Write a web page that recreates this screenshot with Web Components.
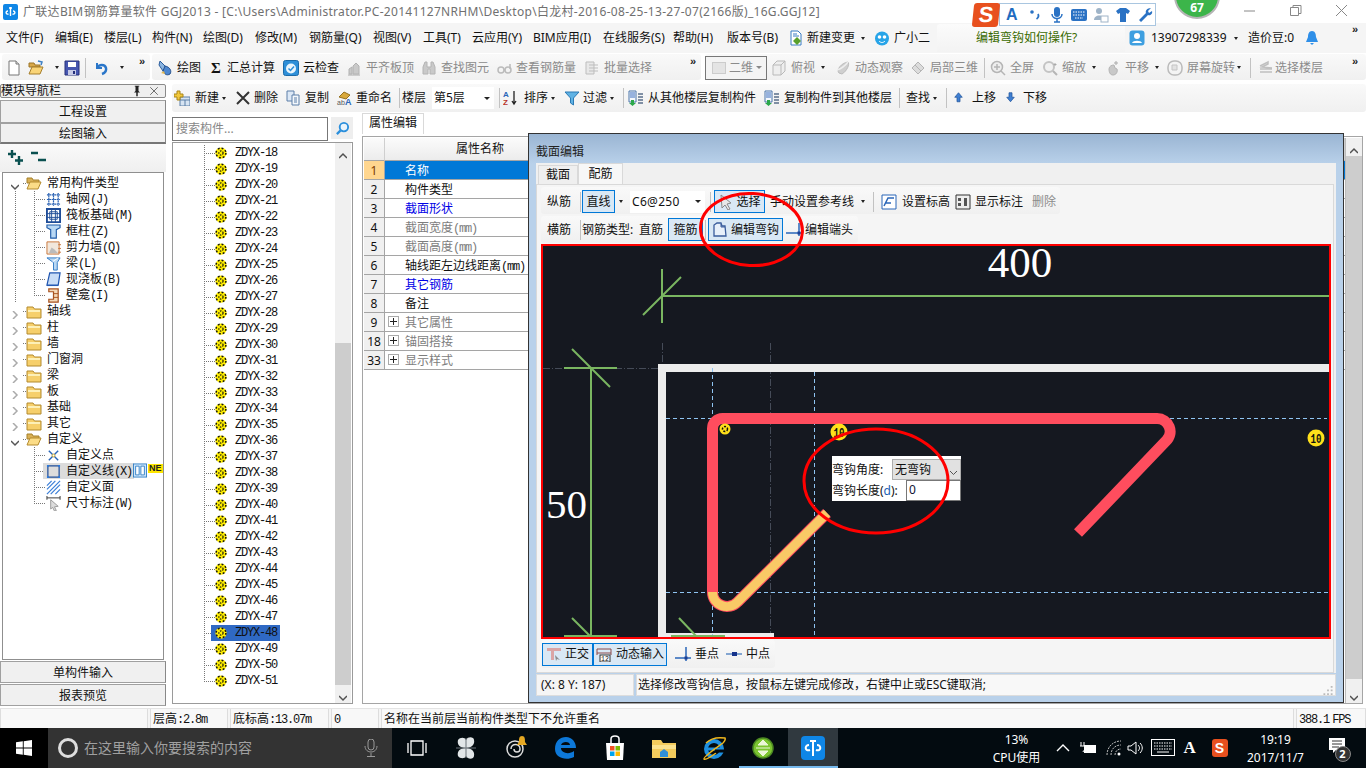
<!DOCTYPE html>
<html lang="zh">
<head>
<meta charset="utf-8">
<title>GGJ2013</title>
<style>
html,body{margin:0;padding:0;}
body{
	position:relative;
	width:1366px;height:768px;overflow:hidden;
	display:flex;flex-direction:column;
	background:#fff;color:#111;
	font:12px/16px "Noto Sans","Noto Sans CJK SC",sans-serif;
}
.work{display:flex;height:628px;flex:none;}
.right{display:flex;flex-direction:column;margin-left:6px;width:1194px;}
.rest{display:flex;flex:1;min-height:0;}
.rowbar{display:flex;gap:0;height:26px;margin-top:1px;flex:none;}
</style>
</head>
<body>
<gl-titlebar>广联达BIM钢筋算量软件 GGJ2013 - [C:\Users\Administrator.PC-20141127NRHM\Desktop\白龙村-2016-08-25-13-27-07(2166版)_16G.GGJ12]</gl-titlebar>

<gl-menubar>
	<gl-tool w="49">文件(F)</gl-tool><gl-tool w="49">编辑(E)</gl-tool><gl-tool w="48">楼层(L)</gl-tool><gl-tool w="51">构件(N)</gl-tool>
	<gl-tool w="52">绘图(D)</gl-tool><gl-tool w="54">修改(M)</gl-tool><gl-tool w="64">钢筋量(Q)</gl-tool><gl-tool w="50">视图(V)</gl-tool>
	<gl-tool w="49">工具(T)</gl-tool><gl-tool w="61">云应用(Y)</gl-tool><gl-tool w="70">BIM应用(I)</gl-tool><gl-tool w="70">在线服务(S)</gl-tool>
	<gl-tool w="54">帮助(H)</gl-tool><gl-tool w="61">版本号(B)</gl-tool>
	<gl-tool w="86" icon="change" gap="3" arrow am="6">新建变更</gl-tool>
	<gl-tool w="63" icon="xiao" gap="4">广小二</gl-tool>
	<gl-help>编辑弯钩如何操作?</gl-help>
	<gl-tool w="119" ml="4" icon="user" gap="6" arrow am="7">13907298339</gl-tool>
	<gl-tool w="56">造价豆:0</gl-tool>
	<gl-tool w="16" icon="bell"></gl-tool>
	<gl-more></gl-more>
</gl-menubar>

<div class="rowbar">
	<gl-toolbar w="148" ml="2" pl="4" pt="1">
		<gl-tool w="22" icon="newfile"></gl-tool>
		<gl-tool w="36" icon="open" arrow am="7"></gl-tool>
		<gl-tool w="21" icon="save"></gl-tool>
		<gl-sep w="9"></gl-sep>
		<gl-tool w="40" icon="undo" arrow am="6"></gl-tool>
		<gl-more></gl-more>
	</gl-toolbar>
	<gl-toolbar w="549" ml="2" pl="5" pt="1">
		<gl-tool w="53" icon="draw">绘图</gl-tool>
		<gl-tool w="73" icon="sigma" gap="1">汇总计算</gl-tool>
		<gl-tool w="63" icon="cloud">云检查</gl-tool>
		<gl-tool w="75" icon="align" off>平齐板顶</gl-tool>
		<gl-tool w="75" icon="binoc" off>查找图元</gl-tool>
		<gl-tool w="88" icon="glasses" off>查看钢筋量</gl-tool>
		<gl-tool w="70" icon="batch" off>批量选择</gl-tool>
		<gl-more></gl-more>
	</gl-toolbar>
	<gl-toolbar w="661" ml="4" pr="4" pt="1">
		<gl-combo w="62" boxed off label="二维"></gl-combo>
		<gl-tool w="64" ml="4" icon="cube" off arrow am="6">俯视</gl-tool>
		<gl-tool w="75" icon="orbit" off>动态观察</gl-tool>
		<gl-tool w="74" icon="local3d" off>局部三维</gl-tool>
		<gl-sep w="6"></gl-sep>
		<gl-tool w="52" icon="zoomfull" off>全屏</gl-tool>
		<gl-tool w="63" icon="zoomin" off arrow am="6">缩放</gl-tool>
		<gl-tool w="62" icon="pan" off arrow am="6">平移</gl-tool>
		<gl-tool w="83" icon="rotate" off arrow am="2">屏幕旋转</gl-tool>
		<gl-sep w="8"></gl-sep>
		<gl-tool w="70" icon="layers" gap="1" off>选择楼层</gl-tool>
		<gl-more></gl-more>
	</gl-toolbar>
</div>

<div class="work">
	<gl-nav></gl-nav>
	<div class="right">
		<gl-toolbar w="1194" h="28" mt="4" pl="2">
			<gl-tool w="61" icon="newitem" gap="5" arrow am="3">新建</gl-tool>
			<gl-tool w="50" icon="cross" gap="3">删除</gl-tool>
			<gl-tool w="51" icon="copy">复制</gl-tool>
			<gl-tool w="63" icon="rename">重命名</gl-tool>
			<gl-sep w="3"></gl-sep>
			<gl-tool w="30">楼层</gl-tool>
			<gl-combo w="62" label="第5层"></gl-combo>
			<gl-sep w="4" ml="5"></gl-sep>
			<gl-tool w="61" icon="sort" gap="5" arrow am="3">排序</gl-tool>
			<gl-tool w="59" icon="filter" gap="3" arrow am="3">过滤</gl-tool>
			<gl-sep w="5"></gl-sep>
			<gl-tool w="136" icon="copyfloor">从其他楼层复制构件</gl-tool>
			<gl-tool w="135" icon="copyfloor">复制构件到其他楼层</gl-tool>
			<gl-sep w="7"></gl-sep>
			<gl-tool w="40" arrow am="3">查找</gl-tool>
			<gl-sep w="8"></gl-sep>
			<gl-tool w="52" icon="up" iw="12" gap="6">上移</gl-tool>
			<gl-tool w="50" icon="down" iw="12" gap="5">下移</gl-tool>
		</gl-toolbar>
		<div class="rest">
			<gl-compo-list></gl-compo-list>
			<gl-props></gl-props>
		</div>
	</div>
</div>

<gl-status></gl-status>
<gl-taskbar></gl-taskbar>

<gl-dialog heading="截面编辑">
	<gl-toolbar slot="bars" w="519" h="27" pl="6" pt="2">
		<gl-tool w="33">纵筋</gl-tool><gl-sep w="2"></gl-sep>
		<gl-tool w="33" on>直线</gl-tool>
		<gl-tool w="15" arrow am="4"></gl-tool>
		<gl-combo w="75" label="C6@250" wide></gl-combo>
		<gl-sep w="4" ml="5"></gl-sep>
		<gl-tool w="51" on icon="pointer" gap="2">选择</gl-tool>
		<gl-tool w="103" ml="5" arrow am="7">手动设置参考线</gl-tool>
		<gl-sep w="8"></gl-sep>
		<gl-tool w="74" icon="level" gap="5">设置标高</gl-tool>
		<gl-tool w="77" icon="dimshow">显示标注</gl-tool>
		<gl-tool w="28" off>删除</gl-tool>
	</gl-toolbar>
	<gl-toolbar slot="bars" w="317" h="27" mt="2" pl="6">
		<gl-tool w="33">横筋</gl-tool><gl-sep w="2"></gl-sep>
		<gl-tool w="57">钢筋类型:</gl-tool>
		<gl-tool w="29">直筋</gl-tool>
		<gl-tool w="35" on>箍筋</gl-tool>
		<gl-sep w="3" ml="2"></gl-sep>
		<gl-tool w="75" on icon="hook" gap="3">编辑弯钩</gl-tool>
		<gl-tool w="68" ml="3" icon="endhead" gap="3">编辑端头</gl-tool>
	</gl-toolbar>
	<gl-canvas slot="canvas">
		<gl-hook-popup></gl-hook-popup>
	</gl-canvas>
	<gl-toolbar slot="snap" w="234" h="28" mt="1" pl="1">
		<gl-tool w="51" on icon="ortho" gap="3">正交</gl-tool>
		<gl-tool w="74" on icon="dyn" gap="4">动态输入</gl-tool>
		<gl-tool w="51" ml="8" icon="perp" gap="4">垂点</gl-tool>
		<gl-tool w="46" icon="mid" gap="4">中点</gl-tool>
	</gl-toolbar>
</gl-dialog>

<gl-badge>67</gl-badge>
<gl-ime></gl-ime>
<gl-annotations></gl-annotations>

<script>
'use strict';

const svg = (inner, vb='0 0 16 16') => `<svg xmlns="http://www.w3.org/2000/svg" viewBox="${vb}" width="100%" height="100%">${inner}</svg>`;
const folderShut = `<path d="M1 4h6l1.500 2H15v9H1z" fill="#f6cf6b" stroke="#b38a2e"/><path d="M2 7h12v2H2z" fill="#fdf0b8"/>`;
const folderOpen = `<path d="M1 3h5l1 2h6v3H1z" fill="#d9b055" stroke="#a5802b"/><path d="M1 14L4 7h11l-3 7z" fill="#fbdc87" stroke="#b38a2e"/>`;
const gear = `<circle cx="8" cy="8" r="7.500" fill="#ffee00"/><circle cx="8" cy="8" r="6.500" fill="none" stroke="#111" stroke-width="2" stroke-dasharray="2.500 2.600"/><circle cx="8" cy="8" r="2.800" fill="none" stroke="#111" stroke-width="1.500" stroke-dasharray="2 1.500"/>`;

const ICONS = {
	newfile: `<path d="M3 1h7l3 3v11H3z" fill="#fff" stroke="#777"/><path d="M10 1v3h3" fill="#ddd" stroke="#777"/>`,
	open: `<path d="M1 3h5l1 2h5v2H1z" fill="#d8a84a" stroke="#9b7426"/><path d="M1 14l3-7h11l-3 7z" fill="#f9d477" stroke="#a57e2c"/><path d="M10 1l4 1-1 3" fill="none" stroke="#3b7fc4" stroke-width="1.500"/>`,
	save: `<path d="M1 1h14v14H1z" fill="#4656b0" stroke="#26307a"/><path d="M4 2h8v5H4z" fill="#fff"/><path d="M4 10h8v5H4z" fill="#c7cbe6"/><path d="M9 11h2v3H9z" fill="#26307a"/>`,
	undo: `<path d="M3 3v5h5" fill="none" stroke="#2a76c9" stroke-width="2"/><path d="M3 8c2-4 8-4 9 0 .6 3-1 5-4 6" fill="none" stroke="#2a76c9" stroke-width="2.500"/>`,
	draw: `<path d="M3 1l6 6-3 4-4-6z" fill="#8ab4e0" stroke="#2a5c9c"/><path d="M8 6c5 1 7 5 5 8-3 2-6 0-7-3z" fill="#4d87d0" stroke="#234f8c"/><path d="M4 13l3-2 1 3z" fill="#e5b94e"/>`,
	sigma: `<text x="1" y="13" font-family="Liberation Serif" font-weight="700" font-size="15" fill="#111">Σ</text>`,
	cloud: `<rect x="0.500" y="0.500" width="15" height="15" rx="2" fill="#2e8fd8" stroke="#1b6aa8"/><circle cx="8" cy="8.500" r="5" fill="#eaf5fc"/><path d="M5.500 8.500l2 2 3.500-4" fill="none" stroke="#2e8fd8" stroke-width="1.500"/>`,
	align: `<path d="M3 14V9l3-2v7zM7 14V6l3-3 3 3v8z" fill="#c9c9c9" stroke="#b2b2b2"/><path d="M2 15h12" stroke="#aaa"/>`,
	binoc: `<path d="M2 7l2-5h2v5h4V2h2l2 5v7h-5V9H7v5H2z" fill="#c9c9c9" stroke="#b4b4b4"/>`,
	glasses: `<circle cx="5" cy="10" r="3" fill="none" stroke="#bbb" stroke-width="1.500"/><circle cx="12" cy="10" r="3" fill="none" stroke="#bbb" stroke-width="1.500"/><path d="M8 10h1M14 9V4" stroke="#bbb" stroke-width="1.500"/>`,
	batch: `<path d="M2 2h8v12H2zM5 5h9M5 8h9M5 11h9" fill="#e8e8e8" stroke="#bdbdbd"/>`,
	cube: `<path d="M2 5l4-4h8v10l-4 4H2z" fill="#eee" stroke="#b9b9b9"/><path d="M2 5h8v10M10 5l4-4" fill="none" stroke="#b9b9b9"/>`,
	orbit: `<path d="M4 13C1 10 6 3 13 2c2 2-1 9-6 12z" fill="#cfcfcf" stroke="#bbb"/><path d="M2 10c3-1 8-4 11-8" fill="none" stroke="#eee" stroke-width="1.500"/>`,
	local3d: `<path d="M2 8l6-6 6 6-6 6z" fill="#dcdcdc" stroke="#b5b5b5"/><path d="M5 5l6 6M8 2l6 6" stroke="#b5b5b5"/>`,
	zoomfull: `<circle cx="7" cy="7" r="5.500" fill="#eee" stroke="#b5b5b5" stroke-width="1.500"/><path d="M4 7h6M7 4v6M11 11l4 4" stroke="#b5b5b5" stroke-width="1.500"/>`,
	zoomin: `<circle cx="7" cy="7" r="5" fill="#f2f2f2" stroke="#c4c4c4" stroke-width="2"/><path d="M11 11l4 4" stroke="#b5b5b5" stroke-width="2"/><path d="M13 3v3M11.500 4.500h3" stroke="#aaa"/>`,
	pan: `<path d="M4 9c0-3 3-4 5-4l1 3 2 1c1 3-1 6-4 6-3 0-4-3-4-6z" fill="#c8c8c8" stroke="#b4b4b4"/><path d="M11 1v4M9 3h4" stroke="#aaa"/>`,
	rotate: `<rect x="1" y="1" width="14" height="14" rx="6" fill="#f4f4f4" stroke="#bbb" stroke-width="1.500"/><path d="M5 5h5v5H5z" fill="#e2e2e2" stroke="#c4c4c4"/>`,
	layers: `<path d="M2 6l8-4v2L4 7l10 1M2 9l12 0M2 12l12 0" fill="none" stroke="#c0c0c0" stroke-width="1.500"/>`,
	newitem: `<rect x="6" y="7" width="10" height="9" fill="#d7e4f2" stroke="#5b7fa6"/><path d="M6 10h10M11 10v6" stroke="#5b7fa6"/><path d="M3 1h3v3h3v3H6v3H3V7H0V4h3z" fill="#f2c83c" stroke="#a98618"/>`,
	cross: `<path d="M2 2l12 12M14 2L2 14" stroke="#333" stroke-width="2"/>`,
	copy: `<path d="M2 1h7v10H2z" fill="#dce8f6" stroke="#5d7ea8"/><path d="M7 5h7v10H7z" fill="#f4f8fc" stroke="#5d7ea8"/><path d="M9 8h3M9 10h3M9 12h3" stroke="#5d7ea8"/>`,
	rename: `<path d="M3 7l5-5 6 3-4 4z" fill="#d9a93c" stroke="#94701e"/><text x="1" y="15" font-size="7" font-family="Liberation Sans" fill="#555">ab</text><text x="9" y="15" font-size="9" font-weight="700" font-family="Liberation Sans" fill="#2a66b8">A</text>`,
	sort: `<text x="0" y="7" font-size="8" font-weight="700" font-family="Liberation Sans" fill="#2a66b8">A</text><text x="0" y="15" font-size="8" font-weight="700" font-family="Liberation Sans" fill="#b8342a">Z</text><path d="M11 1v13M9 11l2 3 2-3" fill="none" stroke="#222" stroke-width="1.300"/>`,
	filter: `<path d="M1 2h14L9.500 8v7l-3-2V8z" fill="#5fb2e4" stroke="#2a79b4"/>`,
	copyfloor: `<path d="M1 1h7v11H1z" fill="#f4f8fc" stroke="#4a74aa"/><path d="M2 3h5M2 5h5M2 7h5" stroke="#3a6cc0"/><path d="M3 10h3v3h2l-3.500 3L1 13h2z" fill="#2ba84a"/><path d="M10 4h5M10 7h5M10 10h5M10 13h5" stroke="#5a6f8a" stroke-width="1.500"/>`,
	up: `<path d="M6 1l5 6H8v6H4V7H1z" fill="#3f7fd2" stroke="#24579c"/>`,
	down: `<path d="M6 13L1 7h3V1h4v6h3z" fill="#3f7fd2" stroke="#24579c"/>`,
	change: `<path d="M3 1h7l3 3v11H3z" fill="#fff" stroke="#3a7cc4"/><path d="M5 4h4M5 6h6" stroke="#3a7cc4"/><path d="M9 7l4 4-4 4-4-4z" fill="#5aa02c"/>`,
	xiao: `<ellipse cx="8" cy="8.500" rx="7" ry="7" fill="#27a4e8"/><circle cx="5.500" cy="7" r="1.800" fill="#fff"/><circle cx="10.500" cy="7" r="1.800" fill="#fff"/><path d="M5 11c2 2 4 2 6 0" fill="none" stroke="#fff"/>`,
	user: `<rect x="0.500" y="0.500" width="15" height="15" rx="3" fill="#3e9fe0"/><circle cx="8" cy="6" r="3" fill="#fff"/><path d="M3 13c1-3 9-3 10 0z" fill="#fff"/>`,
	bell: `<path d="M8 1c3 0 4 3 4 6l2 5H2l2-5c0-3 1-6 4-6z" fill="#2f8fe8"/><path d="M6 13h4l-2 2z" fill="#2f8fe8"/>`,
	pointer: `<path d="M3 1l10 8-4 1 3 5-2 1-3-5-3 3z" fill="#e8e8e8" stroke="#888"/>`,
	level: `<path d="M1 1h14v14H1z" fill="#fff" stroke="#2a66b8"/><path d="M3 12l4-8h6M5 9h5" fill="none" stroke="#2a66b8" stroke-width="1.500"/>`,
	dimshow: `<path d="M1 1h14v14H1z" fill="#eee" stroke="#333"/><path d="M3 4h3v3H3zM9 4h3v8H9zM3 9h3v3H3z" fill="#555"/>`,
	hook: `<path d="M2 14V3l3-2h4l1 3h3l1 10z" fill="#e8f0fa" stroke="#3a5c9c" stroke-width="1.300"/><path d="M9 2v3h4" fill="none" stroke="#3a5c9c"/>`,
	endhead: `<path d="M0 11h16" stroke="#2a66b8" stroke-width="1.500"/><path d="M13 1v13" stroke="#2a66b8" stroke-width="1.500"/><rect x="11.500" y="9.500" width="3" height="3" fill="#1c3f94"/>`,
	ortho: `<path d="M1 2h14v3H8v9H5V5H1z" fill="#dba5a5"/><path d="M9 9l5 5-3-1-1 2z" fill="#8b8b8b"/>`,
	dyn: `<path d="M1 3h14M1 3v6M15 3v6M1 7h14" fill="none" stroke="#8c4a4a"/><rect x="4" y="9" width="10" height="7" fill="#fff" stroke="#333"/><text x="5" y="15" font-size="6.500" font-family="Liberation Mono" fill="#111">12</text>`,
	perp: `<path d="M0 12h16" stroke="#2a66b8" stroke-width="1.500"/><path d="M11 1v14" stroke="#2a66b8" stroke-width="1.500"/><rect x="9.500" y="10.500" width="3" height="3" fill="#1c3f94"/>`,
	mid: `<path d="M0 8h16" stroke="#5c8ac4" stroke-width="1.500"/><rect x="6" y="6" width="5" height="4" fill="#16338c"/>`,
	plusplus: `<path d="M5 0v8M1 4h8M12 6v9M8 10.500h8" stroke="#0a5050" stroke-width="2.400"/>`,
	minusminus: `<path d="M1 3h7M8 10h8" stroke="#0a5050" stroke-width="2.400"/>`,
	folder: folderShut,
	folderopen: folderOpen,
	grid: `<path d="M1 1h14v14H1z" fill="#fff"/><path d="M1 3h14M1 8h14M1 13h14M3 1v14M8 1v14M13 1v14" stroke="#2a62b4" stroke-width="1.300" stroke-dasharray="2 .6"/>`,
	raft: `<path d="M1 1h14v14H1z" fill="#fff" stroke="#1f4d98" stroke-width="2"/><path d="M4 4h8v8H4zM1 6h14M1 10h14M6 1v14M10 1v14" fill="none" stroke="#1f4d98"/>`,
	column: `<path d="M1 1h14v3l-4 2v9H5V6L1 4z" fill="#b9d8f4" stroke="#1f5ba8" stroke-width="1.200"/>`,
	shearwall: `<path d="M1 2h13v13H1z" fill="#f1e7dc" stroke="#c9743a"/><path d="M3 14l3-6 3 2 4 4z" fill="#bbb"/><path d="M13 5h3M13 9h3M13 13h3" stroke="#c9743a"/>`,
	beam: `<path d="M1 2h14l-3 5v8H8V7z" fill="#b9d8f4" stroke="#2f79c4"/><path d="M7 6l6-4" stroke="#fff"/>`,
	slab: `<path d="M4 1h11l-2 13H1z" fill="#c9ddf6" stroke="#1f55b0" stroke-width="1.300"/><path d="M1 14h12v1H1z" fill="#1f55b0"/>`,
	niche: `<path d="M3 1h10v14H3v-3h5V4H3z" fill="#f4d9b8" stroke="#a8521e" stroke-width="1.300"/><path d="M8 6h5M8 10h5" stroke="#a8521e"/>`,
	custompoint: `<path d="M3 3l10 10M13 3L3 13" stroke="#2a66b8" stroke-width="1.500"/><circle cx="8" cy="8" r="1.500" fill="#fff" stroke="#c8a020"/>`,
	customline: `<path d="M2 2h12v12H2z" fill="none" stroke="#1f4d98" stroke-width="1.300"/><path d="M1 1h2v2H1zM13 1h2v2h-2zM1 13h2v2H1zM13 13h2v2h-2z" fill="#2a7be0"/>`,
	customarea: `<path d="M1 6l5-5M1 10l9-9M1 15L15 1M5 15L15 5M10 15l5-5" stroke="#3b7fd8" stroke-width="1.300"/>`,
	dimtool: `<path d="M1 2h14M1 0v4M15 0v4" stroke="#333"/><path d="M5 4l8 7-4 .5 2 4-2 .5-2-4-2 2z" fill="#ddd" stroke="#999"/>`,
	gear,
	pin: `<path d="M5 1h6v1H10v6l2 2H9v5H7v-5H4l2-2V2H5z" fill="#222"/>`,
	close: `<path d="M3 3l10 10M13 3L3 13" stroke="#444"/>`,
	cols: `<rect x="0.500" y="0.500" width="15" height="15" fill="#cfe6fa" stroke="#2a7bc4"/><path d="M3 3h4v10H3zM9 3h4v10H9z" fill="#fff" stroke="#2a7bc4"/>`,
};
const iconSvg = name => svg(ICONS[name] || '');

// latin part of the bitmap font: narrow fixed width
const monoWrap = text => text.replace(/[\x21-\x7e]+/g, m=>`<span class="m">${m}</span>`);
const MONO_CSS = `.m{font:12px/16px "Liberation Mono",monospace;letter-spacing:-1.2px;}`;

class ShadowEl extends HTMLElement {
	constructor(){
		super();
		this.attachShadow({mode:'open'});
	}
	connectedCallback(){
		this.Render();
	}
	Render(){
		this.shadowRoot.innerHTML = `<style>${this.InitialCss}</style>${this.Template}`;
	}
	get InitialCss(){ return ':host{display:block}'; }
	get Template(){ return '<slot></slot>'; }
}

class GlTitlebar extends ShadowEl {
	get InitialCss(){
		return `
:host{display:flex;align-items:center;height:23px;flex:none;background:#fff;color:#707070;padding-left:3px;box-sizing:border-box;position:relative;}
.logo{width:15px;height:16px;margin-right:5px;flex:none;}
.txt{white-space:nowrap;letter-spacing:.3px;}
.btns{position:absolute;left:1242px;top:3px;display:flex;gap:31px;}
.btns i{width:15px;height:15px;display:block;}
		`;
	}
	get Template(){
		return `<span class="logo">${svg('<rect width="15" height="16" rx="2" fill="#0f86e6"/><path d="M7.500 3v9M5 7c-3 0-2 4 .5 3M10 7c3 0 2 4-.5 3M6 4h3" fill="none" stroke="#fff" stroke-width="1.400"/>','0 0 15 16')}</span>
		<span class="txt"><slot></slot></span>
		<div class="btns">
			<i>${svg('<path d="M2 8h11" stroke="#888"/>','0 0 15 15')}</i>
			<i>${svg('<path d="M2.500 4.500h8v8h-8zM5 4.500V2.500h8v8h-2.500" fill="none" stroke="#888"/>','0 0 15 15')}</i>
			<i>${svg('<path d="M2 2l11 11M13 2L2 13" stroke="#888"/>','0 0 15 15')}</i>
		</div>`;
	}
}

class GlMenubar extends ShadowEl {
	get InitialCss(){
		return `:host{display:flex;align-items:center;height:30px;flex:none;background:#f5f5f5;padding:0 4px 0 6px;box-sizing:border-box;}
		::slotted(gl-more){margin-left:auto;}`;
	}
}

class GlHelp extends ShadowEl {
	get InitialCss(){
		return `:host{display:flex;align-items:center;width:188px;height:28px;box-sizing:border-box;padding-left:39px;background:linear-gradient(#fbfbfb,#f3f3f3);color:#3a6b00;border-radius:3px 3px 0 0;white-space:nowrap;}`;
	}
}

class GlToolbar extends ShadowEl {
	Render(){
		super.Render();
		let a = n=>this.getAttribute(n);
		this.style.width = a('w')+'px';
		if(a('h')) this.style.height = a('h')+'px';
		if(a('ml')) this.style.marginLeft = a('ml')+'px';
		if(a('mt')) this.style.marginTop = a('mt')+'px';
		if(a('pl')) this.style.paddingLeft = a('pl')+'px';
		if(a('pr')) this.style.paddingRight = a('pr')+'px';
		if(a('pt')) this.style.paddingTop = a('pt')+'px';
	}
	get InitialCss(){
		return `:host{display:flex;align-items:center;flex:none;box-sizing:border-box;height:26px;padding-right:1px;background:linear-gradient(#f9f9f9,#f0f0f0);border-radius:3px;}
		::slotted(gl-more){margin-left:auto;}`;
	}
}

class GlTool extends ShadowEl {
	Render(){
		let a = n=>this.getAttribute(n);
		let hasIcon = this.hasAttribute('icon');
		this.shadowRoot.innerHTML = `<style>
:host{display:flex;align-items:center;flex:none;box-sizing:border-box;white-space:nowrap;height:100%;}
:host([off]){color:#8b8b8b;}
:host([on]){background:#d9e8f5;border:1px solid #0078d7;justify-content:center;height:23px;}
.i{display:block;flex:none;height:16px;}
.a{flex:none;width:0;height:0;border:3px solid transparent;border-top:3px solid #222;border-bottom:0;border-left-width:2.5px;border-right-width:2.5px;}
		</style>`+
		(hasIcon ? `<span class="i" style="width:${a('iw')||16}px;margin-right:${a('gap')||4}px">${iconSvg(a('icon'))}</span>` : '')+
		`<slot></slot>`+
		(this.hasAttribute('arrow') ? `<span class="a" style="margin-left:${a('am')||4}px"></span>` : '');
		this.style.width = a('w')+'px';
		if(a('ml')) this.style.marginLeft = a('ml')+'px';
	}
}

class GlSep extends ShadowEl {
	Render(){
		super.Render();
		this.style.width = this.getAttribute('w')+'px';
		if(this.getAttribute('ml')) this.style.marginLeft = this.getAttribute('ml')+'px';
	}
	get InitialCss(){
		return `:host{display:block;flex:none;box-sizing:border-box;height:20px;border-left:1px solid #c2c2c2;}`;
	}
	get Template(){ return ''; }
}

class GlMore extends ShadowEl {
	get InitialCss(){
		return `:host{display:block;flex:none;width:10px;font:700 11px/10px "Liberation Sans",sans-serif;color:#222;align-self:flex-start;margin-top:1px;}`;
	}
	get Template(){ return '»'; }
}

class GlCombo extends ShadowEl {
	Render(){
		super.Render();
		this.style.width = this.getAttribute('w')+'px';
	}
	get InitialCss(){
		return `
:host{display:flex;align-items:center;flex:none;box-sizing:border-box;height:22px;background:#fff;padding:0 4px 0 2px;white-space:nowrap;}
:host([boxed]){height:24px;background:#f4f4f4;border:1px solid #777;padding-left:6px;gap:3px;}
:host([off]){color:#8b8b8b;}
:host([wide]) .l{letter-spacing:.3px;}
.sq{width:16px;height:12px;background:#e4e4e4;border:1px solid #ccc;box-sizing:border-box;display:none;}
:host([boxed]) .sq{display:block;}
.a{margin-left:auto;width:0;height:0;border:3px solid transparent;border-top:3px solid #222;border-bottom:0;}
:host([off]) .a{border-top-color:#888;}
		`;
	}
	get Template(){
		return `<span class="sq"></span><span class="l">${this.getAttribute('label')}</span><span class="a"></span>`;
	}
}

class GlNav extends ShadowEl {
	get InitialCss(){
		return `
:host{display:flex;flex-direction:column;width:166px;flex:none;box-sizing:border-box;padding:4px 0 2px;}
.head{display:flex;align-items:center;height:12px;border:1px solid #8a8a8a;border-radius:2px;background:#efefef;flex:none;}
.head span{flex:1;}
.head i{width:12px;height:12px;margin-right:5px;display:block;}
.btn{display:flex;align-items:center;justify-content:center;box-sizing:border-box;background:#f0f0f0;border:1px solid #a0a0a0;border-right-color:#888;flex:none;padding-top:1px;}
.b1{height:23px;margin-top:2px;}
.b2{height:21px;border-bottom:2px solid #777;}
.b3{height:22px;}
.b4{height:22px;margin-top:1px;}
.icons{display:flex;align-items:center;gap:7px;height:28px;padding-left:7px;background:linear-gradient(#fafafa,#efefef);flex:none;}
.icons i{width:16px;height:16px;display:block;}
.box{flex:1;min-height:0;margin:0 2px 1px 2px;border:1px solid #8f8f8f;background:#fff;box-sizing:border-box;padding-top:2px;overflow:hidden;}
		`;
	}
	get Template(){
		return `<div class="head"><span>模块导航栏</span><i>${iconSvg('pin')}</i><i>${iconSvg('close')}</i></div>
		<div class="btn b1">工程设置</div>
		<div class="btn b2">绘图输入</div>
		<div class="icons"><i>${iconSvg('plusplus')}</i><i>${iconSvg('minusminus')}</i></div>
		<div class="box"><gl-type-tree></gl-type-tree></div>
		<div class="btn b3">单构件输入</div>
		<div class="btn b4">报表预览</div>`;
	}
}

const dotV = x => `repeating-linear-gradient(to bottom,#777 0 1px,transparent 1px 2px) ${x}px 0/1px 100% no-repeat`;
const dotVHalf = x => `repeating-linear-gradient(to bottom,#777 0 1px,transparent 1px 2px) ${x}px 0/1px 9px no-repeat`;
const dotH = (x,w) => `repeating-linear-gradient(to right,#777 0 1px,transparent 1px 2px) ${x}px 8px/${w}px 1px no-repeat`;

class GlTypeTree extends ShadowEl {
	get Rows(){
		return [
			[1,'open','folderopen','常用构件类型'],
			[2,'','grid','轴网(J)',1],[2,'','raft','筏板基础(M)',1],[2,'','column','框柱(Z)',1],[2,'','shearwall','剪力墙(Q)',1],
			[2,'','beam','梁(L)',1],[2,'','slab','现浇板(B)',1],[2,'','niche','壁龛(I)',2],
			[1,'shut','folder','轴线'],[1,'shut','folder','柱'],[1,'shut','folder','墙'],[1,'shut','folder','门窗洞'],
			[1,'shut','folder','梁'],[1,'shut','folder','板'],[1,'shut','folder','基础'],[1,'shut','folder','其它'],
			[1,'open','folderopen','自定义'],
			[2,'','custompoint','自定义点',0],[2,'sel','customline','自定义线(X)',0],[2,'','customarea','自定义面',0],[2,'','dimtool','尺寸标注(W)',3],
		];
	}
	get InitialCss(){
		return `
:host{display:block;}
.r{display:flex;align-items:center;height:16px;white-space:nowrap;position:relative;}
.c{width:8px;height:8px;margin-left:8px;flex:none;}
.f{width:16px;height:16px;margin-left:7px;margin-right:5px;flex:none;}
.k{width:15px;height:15px;margin-left:43px;margin-right:5px;flex:none;}
.t{padding:0 2px 0 0;}
.sel{background:#dcdcdc;height:16px;display:flex;align-items:center;margin-left:40px;}
.sel .k{margin-left:3px;}
.new{position:absolute;left:145px;top:1px;font:700 9px/9px "Liberation Sans",sans-serif;background:#ffe600;color:#222;padding:0 1px;}
.cols{position:absolute;left:130px;top:0;width:14px;height:15px;}
${MONO_CSS}
		`;
	}
	get Template(){
		let caret = s => s==='open'
			? svg('<path d="M0 2l4 4 4-4" fill="none" stroke="#555" stroke-width="1.500"/>','0 0 8 8')
			: svg('<path d="M2 0l4 4-4 4" fill="none" stroke="#aaa" stroke-width="1.500"/>','0 0 8 8');
		return this.Rows.map(r=>{
			let [lvl,state,icon,label,line] = r;
			if(lvl===1){
				return `<div class="r" style="background:${dotH(20,3)}"><span class="c">${caret(state)}</span><span class="f">${iconSvg(icon)}</span><span class="t">${monoWrap(label)}</span></div>`;
			}
			let bg = [dotH(31,11)];
			bg.push(line===2||line===3 ? dotVHalf(31) : dotV(31));
			if(line===1||line===2) bg.push(dotV(12));
			if(state==='sel'){
				return `<div class="r" style="background:${bg.join(',')}"><div class="sel"><span class="k">${iconSvg(icon)}</span><span class="t">${monoWrap(label)}</span></div><span class="cols">${iconSvg('cols')}</span><span class="new">NE</span></div>`;
			}
			return `<div class="r" style="background:${bg.join(',')}"><span class="k">${iconSvg(icon)}</span><span class="t">${monoWrap(label)}</span></div>`;
		}).join('');
	}
}

class GlCompoList extends ShadowEl {
	get InitialCss(){
		return `
:host{display:flex;flex-direction:column;width:181px;flex:none;margin-right:9px;}
.search{display:flex;height:25px;margin-top:5px;flex:none;}
.search .in{width:156px;height:24px;box-sizing:border-box;border:1px solid #777;padding-left:3px;color:#888;background:#fff;line-height:21px;}
.search .go{width:22px;height:22px;margin-left:3px;background:#eee;display:flex;align-items:center;justify-content:center;}
.go i{width:15px;height:15px;display:block;}
.list{display:flex;flex:1;min-height:0;border:1px solid #9a9a9a;background:#fff;margin-bottom:4px;box-sizing:border-box;overflow:hidden;}
.items{flex:1;padding-top:2px;overflow:hidden;}
.it{display:flex;align-items:center;height:16px;white-space:nowrap;background:${dotV(31)},${dotH(31,12)};}
.it.last{background:${dotVHalf(31)},${dotH(31,12)};}
.it i{display:block;width:12px;height:12px;margin-left:42px;flex:none;}
.it span{margin-left:8px;}
.it.sel b{display:flex;align-items:center;font-weight:400;height:16px;margin-left:38px;width:69px;background:#2f69c4;}
.it.sel i{margin-left:4px;}
.sb{width:16px;flex:none;margin-right:1px;background:#f0f0f0;display:flex;flex-direction:column;}
.sb .u,.sb .d{height:18px;display:flex;align-items:center;justify-content:center;flex:none;}
.sb .u i,.sb .d i{display:block;width:8px;height:8px;}
.sb .tr{height:182px;flex:none;}
.sb .th{flex:1;background:#cdcdcd;}
${MONO_CSS}
		`;
	}
	get Template(){
		let rows = '';
		for(let n=18; n<=51; n++){
			let cls = n===48 ? 'it sel' : (n===51 ? 'it last' : 'it');
			let body = `<i>${iconSvg('gear')}</i><span class="m">ZDYX-${n}</span>`;
			rows += `<div class="${cls}">${n===48 ? `<b>${body}</b>` : body}</div>`;
		}
		return `<div class="search"><div class="in">搜索构件...</div><div class="go"><i>${svg('<circle cx="9.500" cy="6.500" r="4.500" fill="#eaf4fc" stroke="#2b8fdc" stroke-width="2"/><path d="M6 10l-4 4" stroke="#2b8fdc" stroke-width="2.500"/>')}</i></div></div>
		<div class="list"><div class="items">${rows}</div>
		<div class="sb"><div class="u"><i>${svg('<path d="M0 6l4-4 4 4" fill="none" stroke="#505050" stroke-width="1.500"/>','0 0 8 8')}</i></div><div class="tr"></div><div class="th"></div><div class="d"><i>${svg('<path d="M0 2l4 4 4-4" fill="none" stroke="#505050" stroke-width="1.500"/>','0 0 8 8')}</i></div></div></div>`;
	}
}

class GlProps extends ShadowEl {
	get Rows(){
		return [
			['1','名称','sel'],['2','构件类型',''],['3','截面形状','link'],['4','截面宽度(mm)','dim'],['5','截面高度(mm)','dim'],
			['6','轴线距左边线距离(mm)',''],['7','其它钢筋','link'],['8','备注',''],
			['9','其它属性','grp'],['18','锚固搭接','grp'],['33','显示样式','grp'],
		];
	}
	get InitialCss(){
		return `
:host{display:flex;flex-direction:column;flex:1;min-width:0;}
.tabs{height:21px;display:flex;align-items:flex-end;flex:none;margin-top:1px;}
.tab{width:62px;height:21px;text-align:center;line-height:18px;background:#fff;border:1px solid #d9d9d9;border-bottom:0;box-sizing:border-box;}
.pane{flex:1;min-height:0;border:1px solid #a5a5a5;margin-top:2px;margin-bottom:4px;margin-right:3px;box-sizing:border-box;display:flex;background:#fff;padding:1px 0 0 1px;position:relative;}
.grid{width:981px;display:grid;grid-template-columns:21px 1fr;grid-template-rows:23px;grid-auto-rows:19px;align-content:start;}
.h{background:linear-gradient(#fbfbfb,#ececec);border-bottom:1px solid #a5a5a5;border-right:1px solid #cfcfcf;box-sizing:border-box;line-height:22px;padding-left:71px;white-space:nowrap;}
.h.e{padding:0;}
.n{background:#f0f0f0;border-right:1px solid #a5a5a5;border-bottom:1px solid #a5a5a5;box-sizing:border-box;text-align:center;line-height:20px;}
.c{border-bottom:1px solid #a5a5a5;box-sizing:border-box;padding-left:20px;line-height:20px;position:relative;white-space:nowrap;}
.sel.n{background:#ffd68f;color:#7a3a00;}
.sel.c{background:#0078d7;color:#fff;}
.link{color:#0000e6;}
.dim,.grp{color:#7d7d7d;}
.plus{position:absolute;left:3px;top:3px;width:11px;height:11px;border:1px solid #aaa;box-sizing:border-box;background:linear-gradient(#222,#222) center/7px 1px no-repeat,linear-gradient(#222,#222) center/1px 7px no-repeat,#fff;}
.spacer{flex:1;}
.sb{width:17px;margin-right:0;background:#f0f0f0;border-left:1px solid #bbb;display:flex;flex-direction:column;box-sizing:border-box;}
.sb .u,.sb .d{height:18px;flex:none;display:flex;align-items:center;justify-content:center;}
.sb i{display:block;width:8px;height:8px;}
.sb .th{flex:1;background:#cdcdcd;margin-bottom:6px;}
${MONO_CSS}
		`;
	}
	get Template(){
		let rows = this.Rows.map(([n,t,c])=>`<div class="n ${c==='sel'?'sel':''}">${n}</div><div class="c ${c}">${c==='grp'?'<span class="plus"></span>':''}${monoWrap(t)}</div>`).join('');
		return `<div class="tabs"><div class="tab">属性编辑</div></div>
		<div class="pane"><div class="grid"><div class="h e"></div><div class="h">属性名称</div>${rows}</div><div class="spacer"></div>
		<div class="sb"><div class="u"><i>${svg('<path d="M0 6l4-4 4 4" fill="none" stroke="#505050" stroke-width="1.500"/>','0 0 8 8')}</i></div><div class="th"></div><div class="d"><i>${svg('<path d="M0 2l4 4 4-4" fill="none" stroke="#505050" stroke-width="1.500"/>','0 0 8 8')}</i></div></div></div>`;
	}
}

class GlStatus extends ShadowEl {
	get InitialCss(){
		return `
:host{display:flex;height:20px;flex:none;background:#f5f5f5;box-sizing:border-box;gap:2px;border-top:1px solid #e4e4e4;}
.cell{display:block;box-sizing:border-box;background:#f8f8f8;border:1px solid #ddd;border-width:0 1px;padding-left:2px;white-space:nowrap;line-height:19px;}
.grow{flex:1;}
${MONO_CSS}
		`;
	}
	get Template(){
		return `<div class="cell" style="width:148px"></div><div class="cell" style="width:78px">${monoWrap('层高:2.8m')}</div><div class="cell" style="width:99px">${monoWrap('底标高:13.07m')}</div><div class="cell" style="width:48px">${monoWrap('0')}</div><div class="cell grow">名称在当前层当前构件类型下不允许重名</div><div class="cell" style="width:70px">${monoWrap('388.1 FPS')}</div>`;
	}
}

class GlDialog extends ShadowEl {
	get InitialCss(){
		return `
:host{position:absolute;left:528px;top:133px;width:816px;height:570px;box-sizing:border-box;border:1px solid #333;display:flex;flex-direction:column;padding:0 7px 8px 7px;background:#b9d1ea;}
:host::before{content:"";position:absolute;left:0;right:0;top:0;height:30px;background:linear-gradient(#9ab5d3,#b9d1ea);}
.title{position:relative;height:29px;flex:none;padding-top:10px;box-sizing:border-box;line-height:16px;color:#222;}
.tabs{position:relative;display:flex;align-items:flex-end;height:21px;flex:none;background:#f0f0f0;padding-left:2px;}
.tab{box-sizing:border-box;text-align:center;border:1px solid #d9d9d9;border-bottom:0;background:#efefef;height:19px;width:40px;line-height:18px;}
.tab.on{background:#f7f7f7;height:21px;width:45px;line-height:19px;}
.panel{position:relative;box-sizing:border-box;height:489px;flex:none;background:#f5f5f5;border:1px solid #d9d9d9;padding:2px 2px 0 4px;margin-right:2px;box-shadow:2px 0 0 #f0f0f0;display:flex;flex-direction:column;}
.gapc{height:1px;flex:none;}
.status{position:relative;display:flex;gap:2px;flex:none;height:22px;margin-top:1px;}
.status div{box-sizing:border-box;background:#f5f5f5;border:1px solid #ddd;line-height:20px;padding-left:4px;white-space:nowrap;}
.status .co{width:98px;}
.status .msg{flex:1;padding-left:1px;background:#f8f8f8;}
.grip{position:absolute;right:3px;bottom:3px;width:10px;height:10px;}
		`;
	}
	get Template(){
		return `<div class="title">${this.getAttribute('heading')}</div>
		<div class="tabs"><div class="tab">截面</div><div class="tab on">配筋</div></div>
		<div class="panel"><slot name="bars"></slot><div class="gapc"></div><slot name="canvas"></slot><slot name="snap"></slot></div>
		<div class="status"><div class="co">(X: 8 Y: 187)</div><div class="msg">选择修改弯钩信息，按鼠标左键完成修改，右键中止或ESC键取消;</div>
		<span class="grip">${svg('<path d="M8 1h2v2H8zM4 5h2v2H4zM8 5h2v2H8zM0 9h2v2H0zM4 9h2v2H4zM8 9h2v2H8z" fill="#bbb"/>','0 0 10 11')}</span></div>`;
	}
}

class GlCanvas extends ShadowEl {
	get InitialCss(){
		return `:host{display:block;position:relative;width:790px;height:395px;flex:none;box-sizing:border-box;border:2px solid #f00;background:#151820;overflow:hidden;}
		svg{display:block;}`;
	}
	get Template(){
		const green = '#7ab661', dash = '#8fc4f2', rail = '#ececec';
		const marker = (x,y)=>`<circle cx="${x}" cy="${y}" r="8.500" fill="#ffe01a"/><text x="${x}" y="${y+4.500}" text-anchor="middle" font-family="Liberation Mono" font-size="12" font-weight="700" fill="#111" textLength="11" lengthAdjust="spacingAndGlyphs">10</text>`;
		return `<svg xmlns="http://www.w3.org/2000/svg" width="786" height="391" viewBox="543 246 786 391">
<g stroke="#454b58" stroke-dasharray="7 2 1 2" fill="none">
	<path d="M543 368.500H658"/><path d="M662.500 343V364"/><path d="M770.500 343V637"/>
</g>
<path d="M658 364H1329V372H666V633H774V637H658z" fill="${rail}"/>
<g stroke="${dash}" stroke-dasharray="4 3" fill="none">
	<path d="M712.500 368V637"/><path d="M814.500 372V637"/>
	<path d="M666 418.500H1327"/><path d="M666 592.500H1329"/>
</g>
<g stroke="${green}" stroke-width="2" fill="none">
	<path d="M662 296H1329"/><path d="M662 269V323"/><path d="M643 315L681 277"/>
	<path d="M591 368V637"/><path d="M564 368H617"/><path d="M572 349L610 387"/>
	<path d="M564 636H617"/><path d="M572 618L591 637"/>
	<path d="M671 636H725"/><path d="M679 618L697 637"/>
</g>
<path d="M712.500 592V428.500A10 10 0 0 1 722.500 418.500H1157A13 13 0 0 1 1166 441L1078 533" fill="none" stroke="#ff4d5e" stroke-width="11"/>
<path d="M712.500 592A14.500 14.500 0 0 0 737.500 602L827 513" fill="none" stroke="#ff4d5e" stroke-width="11"/>
<path d="M712.500 592A14.500 14.500 0 0 0 737.500 602L827 513" fill="none" stroke="#f9c966" stroke-width="9"/>
<circle cx="725" cy="429" r="5.500" fill="#ffe01a"/>
<circle cx="725" cy="429" r="2.500" fill="none" stroke="#111" stroke-width="1.500" stroke-dasharray="2 1.500"/>
${marker(839,432)}
${marker(1316,438)}
<text x="1020" y="277" text-anchor="middle" font-family="Liberation Serif" font-size="43" fill="#fff">400</text>
<text x="566.500" y="518" text-anchor="middle" font-family="Liberation Serif" font-size="41" fill="#fff">50</text>
</svg><slot></slot>`;
	}
}

class GlHookPopup extends ShadowEl {
	get InitialCss(){
		return `
:host{position:absolute;left:289px;top:210px;width:129px;height:45px;background:#fff;box-sizing:border-box;display:flex;flex-direction:column;white-space:nowrap;}
.r{display:flex;align-items:center;}
.r1{height:24px;padding-top:3px;box-sizing:border-box;}
.r2{height:21px;}
.sel{margin-left:auto;width:69px;height:21px;box-sizing:border-box;background:#e1e1e1;border:1px solid #adadad;display:flex;align-items:center;padding-left:2px;}
.sel i{margin-left:auto;margin-right:2px;width:9px;height:9px;display:block;}
.inp{margin-left:auto;width:55px;height:21px;box-sizing:border-box;border:1px solid #777;background:#fff;padding-left:2px;line-height:18px;color:#113;}
.d{color:#1a5fb4;}
		`;
	}
	get Template(){
		return `<div class="r r1">弯钩角度:<div class="sel">无弯钩<i>${svg('<path d="M1 3l3.500 3.500L8 3" fill="none" stroke="#555"/>','0 0 9 9')}</i></div></div>
		<div class="r r2">弯钩长度(<span class="d">d</span>):<div class="inp">0</div></div>`;
	}
}

class GlBadge extends ShadowEl {
	get InitialCss(){
		return `
:host{position:absolute;left:1174px;top:0;width:46px;height:20px;overflow:hidden;color:#fff;font:700 12px/16px "Noto Sans",sans-serif;display:flex;align-items:flex-start;justify-content:center;}
:host::before{content:"";position:absolute;left:0;top:-27px;width:46px;height:46px;box-sizing:border-box;border-radius:50%;background:#3cb54a;border:2px solid #b5b5b5;}
span{position:relative;}
		`;
	}
	get Template(){ return '<span><slot></slot></span>'; }
}

class GlIme extends ShadowEl {
	get InitialCss(){
		return `
:host{position:absolute;left:973px;top:2px;display:flex;align-items:center;height:25px;}
.s{width:26px;height:24px;background:#e8501e;transform:skewX(-6deg);border-radius:3px;color:#fff;font:700 22px/24px "Liberation Sans",sans-serif;text-align:center;position:relative;z-index:1;}
.bar{display:flex;align-items:center;gap:6px;height:23px;width:157px;box-sizing:border-box;background:#fff;border:1px solid #a9c6e0;padding-left:6px;color:#1e6cc0;}
.a{font:700 16px/16px "Liberation Sans",sans-serif;width:15px;}
.bar i{display:block;width:16px;height:16px;flex:none;}
		`;
	}
	get Template(){
		const b='#2a72c4';
		return `<div class="s">S</div><div class="bar"><span class="a">A</span>
		<i>${svg(`<circle cx="5" cy="5" r="1.800" fill="${b}"/><path d="M11 7c1 2 0 4-1.500 5" fill="none" stroke="${b}" stroke-width="1.800"/>`)}</i>
		<i>${svg(`<rect x="5" y="0" width="6" height="10" rx="3" fill="${b}"/><path d="M3 7c0 6 10 6 10 0M8 12v3M5 15h6" fill="none" stroke="${b}" stroke-width="1.500"/>`)}</i>
		<i>${svg(`<rect x="0" y="2" width="16" height="12" rx="2" fill="${b}"/><path d="M2 5h12M2 8h12M4 11h8" stroke="#fff" stroke-dasharray="1.500 1"/>`)}</i>
		<i>${svg(`<circle cx="6" cy="4" r="3" fill="#9fb4c8"/><path d="M1 13c0-6 10-6 10 0z" fill="#9fb4c8"/><rect x="8" y="9" width="7" height="6" fill="#fff" stroke="#9fb4c8"/>`)}</i>
		<i>${svg(`<path d="M5 1h6l4 3-2 3-2-1v9H5V6L3 7 1 4z" fill="${b}"/>`)}</i>
		<i>${svg(`<path d="M14 1l-3 3 1 2 3-2c1 3-2 5-4 4l-7 7-2-2 7-7c-1-2 1-5 5-5z" fill="${b}"/>`)}</i></div>`;
	}
}

class GlTaskbar extends ShadowEl {
	get InitialCss(){
		return `
:host{display:flex;align-items:center;height:40px;flex:none;background:#030b10;color:#fff;position:relative;white-space:nowrap;}
.start{width:48px;height:100%;background:#000;display:flex;align-items:center;justify-content:center;flex:none;}
.start i{width:16px;height:16px;display:block;}
.search{width:344px;height:100%;box-sizing:border-box;background:#333;display:flex;align-items:center;padding-left:10px;color:#a0a0a0;font-size:14px;flex:none;}
.search .c{width:20px;height:20px;margin-right:6px;flex:none;box-sizing:border-box;border:3px solid #ddd;border-radius:50%;}
.search .mic{width:14px;height:18px;margin-left:auto;margin-right:14px;display:block;}
.app{width:49.500px;height:100%;display:flex;align-items:center;justify-content:center;flex:none;box-sizing:border-box;}
.app i{width:26px;height:26px;display:block;}
.app.run{border-bottom:2px solid #76b9ed;padding-top:2px;}
.app.act{background:#30393f;border-bottom:2px solid #76b9ed;padding-top:2px;}
.cpu{width:62px;margin-left:148px;margin-top:2px;text-align:center;line-height:18px;flex:none;}
.tray{display:flex;align-items:center;margin-left:6px;flex:none;}
.tray i{display:block;width:18px;height:18px;flex:none;}
.clock{width:66px;margin-left:15px;margin-top:2px;text-align:center;line-height:18px;flex:none;}
.note{position:relative;width:20px;height:22px;margin-left:19px;flex:none;}
.note i{display:block;width:18px;height:18px;}
.note b{position:absolute;left:7px;top:9px;width:16px;height:16px;border-radius:50%;background:#333;border:1px solid #888;box-sizing:border-box;font:700 11px/14px "Noto Sans",sans-serif;text-align:center;}
		`;
	}
	get Template(){
		let app = (inner,cls='')=>`<div class="app ${cls}"><i>${svg(inner,'0 0 26 26')}</i></div>`;
		let t = (inner,style='')=>`<i style="${style}">${svg(inner,'0 0 18 18')}</i>`;
		return `<div class="start"><i>${svg('<path d="M0 2.300l6.800-1V7.600H0zM7.700 1.200L16 0v7.600H7.700zM0 8.400h6.800v6.300L0 13.700zM7.700 8.400H16V16l-8.300-1.200z" fill="#fff"/>')}</i></div>
		<div class="search"><span class="c"></span>在这里输入你要搜索的内容<i class="mic">${svg('<rect x="4" y="0" width="6" height="11" rx="3" fill="none" stroke="#999"/><path d="M1 7c0 8 12 8 12 0M7 14v3M3 17.500h8" fill="none" stroke="#999"/>','0 0 14 18')}</i></div>`+
		app('<path d="M7 6h12v14H7zM4 8v10M22 8v10" fill="none" stroke="#fff" stroke-width="1.300"/>')+
		app('<path d="M13 13C6 13 4 9 5 5c2-3 7-3 8 0 2-4 8-3 8 0 1 4-2 8-8 8zM13 13c-7 0-9 4-8 8 2 3 7 3 8 0 2 4 8 3 8 0 1-4-2-8-8-8z" fill="#e2e6e8"/><path d="M13 3v20M3 13h20" stroke="#6b7378"/>')+
		app('<circle cx="12" cy="14" r="8" fill="none" stroke="#ddd" stroke-width="1.500"/><path d="M8 14c0-6 9-6 9 0 0 4-6 4-6 0" fill="none" stroke="#ddd" stroke-width="1.500"/><path d="M19 1c3 0 3 3 3 6l2 3h-10l2-3c0-3 0-6 3-6z" fill="#e5a823"/>')+
		app('<path d="M3 14C3 6 8 2 14 2c6 0 10 5 10 11H9c0 5 8 7 13 3v6c-8 4-19 1-19-8zM9 10h9c0-4-8-4-9 0z" fill="#0d78d8"/>')+
		app('<path d="M4 8h18l-1 17H5z" fill="#fff"/><path d="M9 8V4c0-4 8-4 8 0v4" fill="none" stroke="#fff" stroke-width="1.500"/><rect x="8" y="11" width="4.500" height="4.500" fill="#f25022"/><rect x="13.500" y="11" width="4.500" height="4.500" fill="#7fba00"/><rect x="8" y="16.500" width="4.500" height="4.500" fill="#00a4ef"/><rect x="13.500" y="16.500" width="4.500" height="4.500" fill="#ffb900"/>')+
		app('<path d="M1 5h9l2 3h13v15H1z" fill="#f3cb5c"/><path d="M1 10h24v4H1z" fill="#fbe28e"/><path d="M9 22v-5l4-3 4 3v5z" fill="#2f8fd8"/>')+
		app('<circle cx="13" cy="14" r="8" fill="none" stroke="#1e90e0" stroke-width="4"/><path d="M5 14h16" stroke="#1e90e0" stroke-width="3"/><path d="M22 8C14 14 2 22 3 24c2 1 8-3 12-6M5 8c5-5 12-6 19-5 1 2-1 4-2 5" fill="none" stroke="#efb71e" stroke-width="1.500"/><rect x="14" y="14.500" width="9" height="3" fill="#030b10"/>')+
		app('<circle cx="13" cy="13" r="10" fill="#7cc531" stroke="#4c8a22" stroke-width="1.500"/><path d="M6 13h14M8 10h10l-5-5zM8 16h10l-5 5z" fill="#eaf6d8" stroke="#eaf6d8"/>','run')+
		app('<rect x="1" y="1" width="24" height="24" rx="4" fill="#0f86e6"/><path d="M13 5v16M9 10c-5 0-4 7 1 5M17 10c5 0 4 7-1 5M10 6h6" fill="none" stroke="#fff" stroke-width="2"/>','act')+
		`<div class="cpu">13%<br>CPU使用</div>
		<div class="tray">
			${t('<path d="M3 12l6-6 6 6" fill="none" stroke="#fff" stroke-width="1.400"/>')}
			${t('<rect x="5" y="6" width="12" height="8" fill="#fff"/><path d="M2 3v4M5 3v4M1 7h6v2c0 2-3 2-3 4" fill="none" stroke="#fff"/>','margin-left:7px')}
			${t('<path d="M2 16c0-8 6-14 14-14M6 16c0-6 4-10 10-10M10 16c0-3 2-6 6-6" fill="none" stroke="#bbb" stroke-dasharray="2 1"/><circle cx="14" cy="15" r="1.500" fill="#fff"/>','margin-left:8px')}
			${t('<path d="M2 7h3l5-4v12l-5-4H2z" fill="none" stroke="#fff"/><path d="M12 6c2 2 2 4 0 6M14 4c3 3 3 7 0 10" fill="none" stroke="#fff"/>','margin-left:3px')}
			<i style="margin-left:7px;width:24px;height:18px">${svg('<rect x="0.500" y="0.500" width="23" height="16" fill="none" stroke="#fff"/><path d="M3 4h18M3 7h18M3 10h18" stroke="#fff" stroke-dasharray="1.500 1"/><path d="M6 13h12" stroke="#fff"/>','0 0 24 18')}</i>
			<span style="margin-left:9px;width:14px;font:700 17px/18px 'Liberation Serif',serif">A</span>
			<span style="margin-left:14px;width:16px;height:18px;background:#e8501e;border-radius:3px;font:700 14px/18px 'Liberation Sans',sans-serif;text-align:center;display:block">S</span>
		</div>
		<div class="clock">19:19<br>2017/11/7</div>
		<div class="note"><i>${svg('<path d="M1 1h16v12H8l-3 3v-3H1z" fill="#fff"/><path d="M4 4h10M4 7h10M4 10h7" stroke="#333"/>','0 0 18 18')}</i><b>2</b></div>`;
	}
}

class GlAnnotations extends ShadowEl {
	get InitialCss(){
		return `:host{position:absolute;left:0;top:0;width:1366px;height:768px;pointer-events:none;}svg{display:block;}`;
	}
	get Template(){
		return `<svg xmlns="http://www.w3.org/2000/svg" width="1366" height="768" viewBox="0 0 1366 768">
			<ellipse cx="751.500" cy="229.500" rx="51" ry="36" fill="none" stroke="#f00" stroke-width="3" transform="rotate(3 751 229)"/>
			<ellipse cx="876" cy="481" rx="72" ry="52" fill="none" stroke="#f00" stroke-width="3"/>
		</svg>`;
	}
}

customElements.define('gl-titlebar',GlTitlebar);
customElements.define('gl-menubar',GlMenubar);
customElements.define('gl-help',GlHelp);
customElements.define('gl-toolbar',GlToolbar);
customElements.define('gl-tool',GlTool);
customElements.define('gl-sep',GlSep);
customElements.define('gl-more',GlMore);
customElements.define('gl-combo',GlCombo);
customElements.define('gl-type-tree',GlTypeTree);
customElements.define('gl-nav',GlNav);
customElements.define('gl-compo-list',GlCompoList);
customElements.define('gl-props',GlProps);
customElements.define('gl-status',GlStatus);
customElements.define('gl-dialog',GlDialog);
customElements.define('gl-canvas',GlCanvas);
customElements.define('gl-hook-popup',GlHookPopup);
customElements.define('gl-badge',GlBadge);
customElements.define('gl-ime',GlIme);
customElements.define('gl-taskbar',GlTaskbar);
customElements.define('gl-annotations',GlAnnotations);
</script>
</body>
</html>
